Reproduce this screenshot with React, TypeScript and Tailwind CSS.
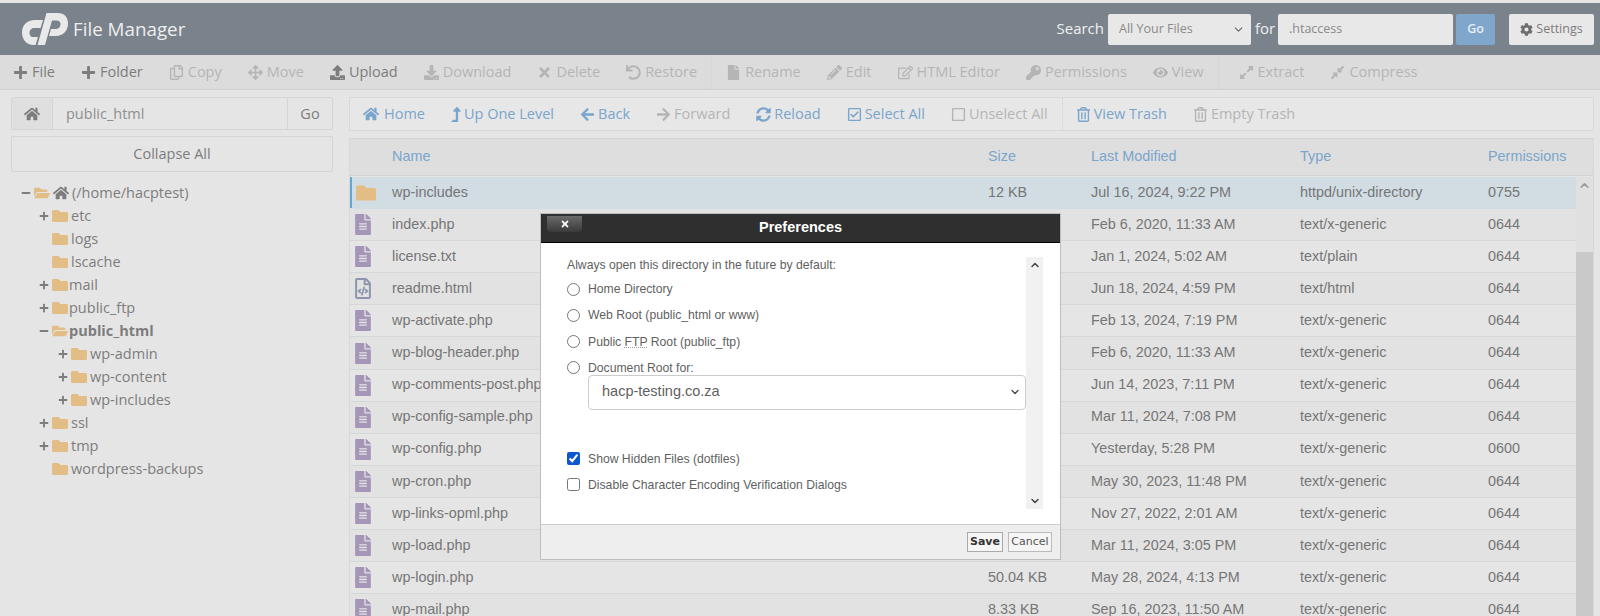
import type { ComponentType } from "react";
import { ChevronDown, ChevronUp } from "lucide-react";
import {
  FaArrowLeft,
  FaArrowRight,
  FaArrowsAlt,
  FaCog,
  FaCompressAlt,
  FaDownload,
  FaExpandAlt,
  FaEye,
  FaFile,
  FaFileAlt,
  FaFolder,
  FaFolderOpen,
  FaHome,
  FaKey,
  FaLevelUpAlt,
  FaPencilAlt,
  FaPlus,
  FaRegCheckSquare,
  FaRegCopy,
  FaRegEdit,
  FaRegFileCode,
  FaRegSquare,
  FaRegTrashAlt,
  FaSyncAlt,
  FaTimes,
  FaUndo,
  FaUpload,
  FaMinus
} from "react-icons/fa";

type Icon = ComponentType<{ className?: string }>;
type Action = { label: string; icon: Icon; tone: string; iconClass?: string };

const OFF = "text-[#b5b5b5]";
const ON = "text-[#7d7d7d]";
const LINK = "text-[#7aa5cc]";

const fileActions: Action[][] = [
  [
    { label: "File", icon: FaPlus, tone: ON },
    { label: "Folder", icon: FaPlus, tone: ON },
    { label: "Copy", icon: FaRegCopy, tone: OFF },
    { label: "Move", icon: FaArrowsAlt, tone: OFF },
    { label: "Upload", icon: FaUpload, tone: ON },
    { label: "Download", icon: FaDownload, tone: OFF },
    { label: "Delete", icon: FaTimes, tone: OFF },
    { label: "Restore", icon: FaUndo, tone: OFF }
  ],
  [
    { label: "Rename", icon: FaFile, tone: OFF },
    { label: "Edit", icon: FaPencilAlt, tone: OFF },
    { label: "HTML Editor", icon: FaRegEdit, tone: OFF },
    { label: "Permissions", icon: FaKey, tone: OFF },
    { label: "View", icon: FaEye, tone: OFF }
  ],
  [
    { label: "Extract", icon: FaExpandAlt, tone: OFF },
    { label: "Compress", icon: FaCompressAlt, tone: OFF }
  ]
];

const navActions: Action[][] = [
  [
    { label: "Home", icon: FaHome, tone: LINK, iconClass: "mr-[2px] h-[16px] w-auto" },
    { label: "Up One Level", icon: FaLevelUpAlt, tone: LINK, iconClass: "h-[15px] w-[10px]" },
    { label: "Back", icon: FaArrowLeft, tone: LINK },
    { label: "Forward", icon: FaArrowRight, tone: OFF },
    { label: "Reload", icon: FaSyncAlt, tone: LINK },
    { label: "Select All", icon: FaRegCheckSquare, tone: LINK },
    { label: "Unselect All", icon: FaRegSquare, tone: OFF }
  ],
  [
    { label: "View Trash", icon: FaRegTrashAlt, tone: LINK },
    { label: "Empty Trash", icon: FaRegTrashAlt, tone: OFF }
  ]
];

const tree = [
  { name: "etc", depth: 1, toggle: "plus" },
  { name: "logs", depth: 1 },
  { name: "lscache", depth: 1 },
  { name: "mail", depth: 1, toggle: "plus", tight: true },
  { name: "public_ftp", depth: 1, toggle: "plus", tight: true },
  { name: "public_html", depth: 1, toggle: "minus", open: true, tight: true },
  { name: "wp-admin", depth: 2, toggle: "plus" },
  { name: "wp-content", depth: 2, toggle: "plus" },
  { name: "wp-includes", depth: 2, toggle: "plus" },
  { name: "ssl", depth: 1, toggle: "plus" },
  { name: "tmp", depth: 1, toggle: "plus" },
  { name: "wordpress-backups", depth: 1 }
];

const files = [
  { name: "wp-includes", kind: "folder", size: "12 KB", date: "Jul 16, 2024, 9:22 PM", type: "httpd/unix-directory", perms: "0755" },
  { name: "index.php", date: "Feb 6, 2020, 11:33 AM", type: "text/x-generic", perms: "0644" },
  { name: "license.txt", date: "Jan 1, 2024, 5:02 AM", type: "text/plain", perms: "0644" },
  { name: "readme.html", kind: "html", date: "Jun 18, 2024, 4:59 PM", type: "text/html", perms: "0644" },
  { name: "wp-activate.php", date: "Feb 13, 2024, 7:19 PM", type: "text/x-generic", perms: "0644" },
  { name: "wp-blog-header.php", date: "Feb 6, 2020, 11:33 AM", type: "text/x-generic", perms: "0644" },
  { name: "wp-comments-post.php", date: "Jun 14, 2023, 7:11 PM", type: "text/x-generic", perms: "0644" },
  { name: "wp-config-sample.php", date: "Mar 11, 2024, 7:08 PM", type: "text/x-generic", perms: "0644" },
  { name: "wp-config.php", date: "Yesterday, 5:28 PM", type: "text/x-generic", perms: "0600" },
  { name: "wp-cron.php", date: "May 30, 2023, 11:48 PM", type: "text/x-generic", perms: "0644" },
  { name: "wp-links-opml.php", date: "Nov 27, 2022, 2:01 AM", type: "text/x-generic", perms: "0644" },
  { name: "wp-load.php", date: "Mar 11, 2024, 3:05 PM", type: "text/x-generic", perms: "0644" },
  { name: "wp-login.php", size: "50.04 KB", date: "May 28, 2024, 4:13 PM", type: "text/x-generic", perms: "0644" },
  { name: "wp-mail.php", size: "8.33 KB", date: "Sep 16, 2023, 11:50 AM", type: "text/x-generic", perms: "0644" }
];

const COLUMNS = "grid grid-cols-[42px_596px_103px_209px_188px_1fr]";

function ActionBar({ groups, seps, gap }: { groups: Action[][]; seps: string[]; gap: string }) {
  return (
    <>
      {groups.map((group, i) => (
        <div
          key={i}
          className={`flex h-full items-center gap-[26px] ${i > 0 ? `ml-[14px] border-l border-dotted border-[#d2d2d2] ${seps[i - 1]}` : ""}`}
        >
          {group.map(({ label, icon: Glyph, tone, iconClass }) => (
            <span key={label} className={`flex items-center whitespace-nowrap ${gap} ${tone}`}>
              <Glyph className={iconClass ?? "h-[15px] w-auto"} />
              {label}
            </span>
          ))}
        </div>
      ))}
    </>
  );
}

function CpanelLogo() {
  return (
    <svg viewBox="0 0 46 32" className="h-[32px] w-[46px] fill-[#e9e9e9]">
      <path d="M21 7 L13 7 C5 7 0 12 0 19.5 C0 27 5 32 11 32 L13.5 32 L16 24 L11 24 C8.5 24 7.5 22 7.5 20 C7.5 17 9.5 15 12.5 15 L18.5 15 Z" />
      <path d="M24.5 0 L36 0 C42 0 46 4 46 10.5 C46 18 41 23 34 23 L27 23 L29 16 L33 16 C36.5 16 38.5 14 38.5 11 C38.5 9 37 7.5 34.5 7.5 L30 7.5 L23 32 L15.5 32 Z" />
    </svg>
  );
}

function TreeRow({ name, depth, toggle, open, tight }: { name: string; depth: number; toggle?: string; open?: boolean; tight?: boolean }) {
  const Folder = open ? FaFolderOpen : FaFolder;
  return (
    <li className={`flex h-[23px] items-center ${depth === 2 ? "pl-[47px]" : "pl-[28px]"}`}>
      <span className="flex w-[13px] text-[#7d7d7d]">
        {toggle === "plus" && <FaPlus className="size-[10px]" />}
        {toggle === "minus" && <FaMinus className="size-[10px]" />}
      </span>
      <Folder className="size-[16px] text-[#e2bd85]" />
      <span className={`${tight ? "ml-[1px]" : "ml-[3px]"} ${open ? "font-bold" : ""}`}>{name}</span>
    </li>
  );
}

function FileIcon({ kind }: { kind?: string }) {
  if (kind === "folder") return <FaFolder className="ml-[5px] h-[20px] w-[22px] text-[#e2bd85]" />;
  if (kind === "html") return <FaRegFileCode className="ml-[5px] h-[21px] w-[16px] text-[#8b96ae]" />;
  return <FaFileAlt className="ml-[5px] h-[21px] w-[16px] text-[#a596b8]" />;
}

function PreferencesDialog() {
  const roots = ["Home Directory", "Web Root (public_html or www)"];
  return (
    <div className="absolute left-[540px] top-[213px] flex h-[347px] w-[521px] flex-col border border-[#bdbdbd] bg-white font-['Liberation_Sans',sans-serif] text-[12.2px] text-[#5f5f5f]">
      <div className="relative flex h-[29px] items-center justify-center border-b border-b-black bg-[#2f2f2f] text-[14.5px] font-bold text-white">
        Preferences
        <span className="absolute left-[6px] top-[2px] flex h-[16px] w-[35px] items-center justify-center rounded-b-[4px] bg-gradient-to-b from-[#6b6b6b] to-[#3a3a3a]">
          <FaTimes className="size-[10px] text-white" />
        </span>
      </div>
      <div className="flex flex-1 pl-[26px] pr-[17px] pt-[8px]">
        <div className="flex-1">
          <p className="mt-[5px]">Always open this directory in the future by default:</p>
          <div className="mt-[8px] flex flex-col gap-[12.2px]">
            {roots.map((label) => (
              <label key={label} className="flex h-[14px] items-center gap-[8px]">
                <input type="radio" name="root" className="m-0 size-[13px]" />
                {label}
              </label>
            ))}
            <label className="flex h-[14px] items-center gap-[8px]">
              <input type="radio" name="root" className="m-0 size-[13px]" />
              <span>
                Public <abbr className="underline decoration-dotted decoration-[#999]">FTP</abbr> Root (public_ftp)
              </span>
            </label>
            <label className="flex h-[14px] items-center gap-[8px]">
              <input type="radio" name="root" className="m-0 size-[13px]" />
              Document Root for:
            </label>
          </div>
          <div className="ml-[21px] flex h-[35px] items-center justify-between rounded-[4px] border border-[#ccc] pl-[13px] pr-[4px] text-[14.5px]">
            hacp-testing.co.za
            <ChevronDown className="size-[12px] text-[#444]" strokeWidth={2.5} />
          </div>
          <div className="mt-[42px] flex flex-col gap-[12px]">
            <label className="flex h-[14px] items-center gap-[8px]">
              <input type="checkbox" defaultChecked className="m-0 size-[13px] accent-[#0b57d0]" />
              Show Hidden Files (dotfiles)
            </label>
            <label className="flex h-[14px] items-center gap-[8px]">
              <input type="checkbox" className="m-0 size-[13px]" />
              Disable Character Encoding Verification Dialogs
            </label>
          </div>
        </div>
        <div className="mt-[6px] flex h-[252px] w-[17px] flex-col items-center justify-between bg-[#f1f1f1] py-[2px] text-[#444]">
          <ChevronUp className="size-[12px]" strokeWidth={3} />
          <ChevronDown className="size-[12px]" strokeWidth={3} />
        </div>
      </div>
      <div className="flex h-[35px] items-center justify-end gap-[5px] border-t border-[#ccc] bg-[#eee] pr-[8px] font-['DejaVu_Sans',sans-serif] text-[11px]">
        <button className="h-[20px] w-[36px] border border-[#aaa] bg-[#f5f5f5] font-bold text-[#333]">Save</button>
        <button className="h-[20px] w-[44px] border border-[#bbb] bg-[#f5f5f5] text-[#555]">Cancel</button>
      </div>
    </div>
  );
}

export default function App() {
  return (
    <div className="relative h-[616px] w-[1600px] overflow-hidden bg-[#e5e5e5] pt-[3px] font-['Open_Sans',sans-serif] text-[14.5px] text-[#7d7d7d]">
      <header className="flex h-[52px] items-center bg-[#7a828c] pl-[22px] pr-[6px]">
        <CpanelLogo />
        <span className="ml-[5px] text-[18.8px] text-[#eeeeee]">File Manager</span>
        <div className="ml-auto flex items-center text-[#f0f0f0]">
          <span className="pb-[2px] text-[15px]">Search</span>
          <div className="ml-[4px] flex h-[31px] w-[143px] items-center justify-between rounded-[2px] bg-[#e8e8e8] pl-[11px] pr-[6px] text-[12.5px] text-[#8a8a8a]">
            All Your Files
            <ChevronDown className="size-[13px] text-[#666]" />
          </div>
          <span className="ml-[4px] w-[23px] pb-[2px] text-[15px]">for</span>
          <div className="flex h-[31px] w-[175px] items-center rounded-[2px] bg-[#e8e8e8] pl-[11px] text-[12.5px] text-[#8a8a8a]">.htaccess</div>
          <div className="ml-[3px] flex h-[31px] w-[39px] items-center justify-center rounded-[2px] bg-[#7ea7cb] text-[12.5px] font-semibold text-[#e8eef3]">Go</div>
          <div className="ml-[14px] flex h-[31px] w-[85px] items-center justify-center gap-[3px] rounded-[2px] bg-[#e8e8e8] text-[12.5px] text-[#7d7d7d]">
            <FaCog className="size-[13px] text-[#6f6f6f]" />
            Settings
          </div>
        </div>
      </header>

      <nav className="flex h-[35px] items-center border-b border-[#cfcfcf] bg-[#dcdcdc] pl-[13px]">
        <ActionBar groups={fileActions} seps={["pl-[14px]", "pl-[20px]"]} gap="gap-[4px]" />
      </nav>

      <div className="flex gap-[16px] pl-[11px] pr-[6px] pt-[7px]">
        <aside className="w-[322px] shrink-0">
          <div className="flex h-[33px] rounded-[2px] border border-[#d5d5d5]">
            <span className="flex w-[41px] items-center justify-center border-r border-[#d5d5d5] bg-[#dfdfdf]">
              <FaHome className="size-[16px]" />
            </span>
            <span className="flex flex-1 items-center pl-[13px] text-[#8f8f8f]">public_html</span>
            <span className="flex w-[45px] items-center justify-center border-l border-[#d5d5d5]">Go</span>
          </div>
          <div className="mt-[6px] flex h-[36px] items-center justify-center rounded-[2px] border border-[#d5d5d5]">Collapse All</div>
          <ul className="mt-[8.5px]">
            <li className="flex h-[24px] items-center pl-[10px]">
              <FaMinus className="mr-[3px] size-[10px]" />
              <FaFolderOpen className="size-[16px] text-[#e2bd85]" />
              <FaHome className="ml-[3px] size-[16px]" />
              <span className="ml-[3px]">(/home/hacptest)</span>
            </li>
            {tree.map((node) => (
              <TreeRow key={node.name} {...node} />
            ))}
          </ul>
        </aside>

        <main className="min-w-0 flex-1">
          <div className="flex h-[34px] items-center border border-[#d8d8d8] bg-[#e7e7e7] pl-[13px]">
            <ActionBar groups={navActions} seps={["pl-[13px]"]} gap="gap-[3px]" />
          </div>
          <div className="mt-[7px] border-x border-[#d8d8d8]">
            <div className={`${COLUMNS} h-[38px] items-center border-y border-y-[#d2d2d2] bg-[#dedede] font-['Liberation_Sans',sans-serif] text-[14.4px] ${LINK}`}>
              <span />
              <span>Name</span>
              <span>Size</span>
              <span>Last Modified</span>
              <span>Type</span>
              <span>Permissions</span>
            </div>
            <div className="mt-[1px] flex">
              <div className="w-[1227px] font-['Liberation_Sans',sans-serif] text-[14.4px] text-[#767676]">
                {files.map((file, i) => (
                  <div
                    key={file.name}
                    className={`${COLUMNS} h-[32.1px] items-center border-b ${
                      i === 0
                        ? "border-b-transparent bg-[#d1dce3] shadow-[inset_2px_0_0_#5fa9d3]"
                        : "border-b-[#d7d7d7] even:bg-[#e2e2e2]"
                    }`}
                  >
                    <FileIcon kind={file.kind} />
                    <span>{file.name}</span>
                    <span>{file.size}</span>
                    <span>{file.date}</span>
                    <span>{file.type}</span>
                    <span>{file.perms}</span>
                  </div>
                ))}
              </div>
              <div className="flex h-[440px] w-[17px] flex-col bg-[#e0e0e0]">
                <div className="flex h-[75px] justify-center pt-[2px]">
                  <ChevronUp className="size-[13px] text-[#9a9a9a]" strokeWidth={3} />
                </div>
                <div className="flex-1 bg-[#c9c9c9]" />
              </div>
            </div>
          </div>
        </main>
      </div>

      <PreferencesDialog />
    </div>
  );
}
